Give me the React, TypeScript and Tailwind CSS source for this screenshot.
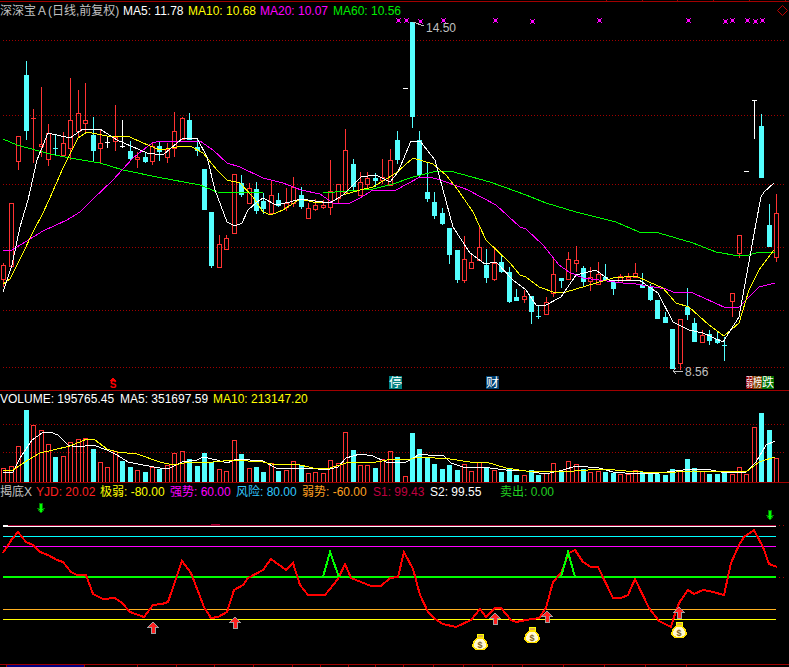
import React from 'react';

const RED = '#ff3232';
const CYAN = '#54ffff';
const GRID = '#a00000';

const xAt = (i: number) => Math.round(3.4 + 7.43 * i);

// kleur, high, top, bottom, low
const candles: [string, number, number, number, number][] = [
  ['r', 263, 265, 279, 287], ['r', 203, 203, 266, 266], ['r', 136, 136, 161, 170], ['c', 61, 75, 131, 140],
  ['r', 109, 118, 118, 163], ['r', 87, 144, 146, 157], ['r', 124, 133, 159, 166], ['c', 135, 148, 148, 155],
  ['r', 132, 143, 155, 155], ['r', 78, 120, 148, 160], ['r', 90, 113, 131, 138], ['r', 83, 120, 123, 132],
  ['c', 117, 135, 151, 162], ['r', 130, 143, 148, 163], ['w', 137, 142, 142, 148], ['r', 105, 137, 141, 151],
  ['w', 120, 146, 146, 148], ['c', 141, 151, 159, 161], ['r', 152, 157, 159, 168], ['c', 153, 157, 162, 163],
  ['r', 143, 146, 161, 165], ['c', 142, 146, 152, 161], ['r', 143, 149, 157, 163], ['r', 112, 131, 148, 157],
  ['r', 117, 118, 139, 139], ['c', 113, 120, 140, 140], ['c', 140, 147, 151, 156], ['c', 169, 169, 210, 210],
  ['c', 212, 212, 266, 268], ['r', 235, 244, 267, 267], ['r', 235, 238, 249, 250], ['r', 174, 174, 233, 233],
  ['c', 175, 183, 195, 197], ['r', 183, 188, 203, 203], ['c', 182, 189, 211, 214], ['c', 193, 201, 209, 214],
  ['r', 180, 195, 213, 213], ['c', 193, 200, 206, 207], ['r', 188, 203, 207, 211], ['r', 177, 187, 203, 207],
  ['c', 187, 195, 207, 209], ['r', 203, 208, 218, 218], ['r', 199, 205, 209, 211], ['r', 200, 205, 207, 209],
  ['r', 160, 191, 207, 215], ['r', 184, 184, 198, 203], ['r', 129, 150, 192, 192], ['c', 159, 164, 187, 192],
  ['r', 172, 182, 195, 195], ['r', 172, 178, 184, 188], ['c', 173, 178, 181, 187], ['r', 159, 177, 180, 184],
  ['r', 149, 160, 185, 185], ['c', 131, 140, 160, 164], ['w', 88, 88, 88, 88], ['c', 22, 22, 117, 128],
  ['c', 131, 140, 175, 177], ['c', 163, 192, 199, 202], ['c', 192, 202, 216, 219], ['c', 208, 213, 224, 225],
  ['c', 228, 228, 255, 264], ['c', 250, 250, 280, 283], ['r', 236, 259, 280, 283], ['r', 255, 262, 268, 268],
  ['r', 226, 247, 260, 260], ['c', 249, 265, 278, 283], ['r', 248, 263, 279, 281], ['c', 255, 262, 272, 273],
  ['c', 267, 272, 302, 303], ['c', 289, 297, 301, 301], ['r', 290, 296, 299, 303], ['c', 296, 296, 312, 324],
  ['c', 305, 316, 317, 319], ['r', 297, 302, 314, 315], ['r', 258, 274, 293, 297], ['c', 278, 278, 281, 288],
  ['r', 252, 259, 279, 279], ['r', 246, 260, 263, 272], ['c', 266, 268, 282, 286], ['r', 267, 277, 281, 291],
  ['r', 262, 274, 284, 284], ['c', 264, 277, 280, 280], ['c', 280, 282, 289, 295], ['r', 274, 276, 282, 282],
  ['r', 273, 277, 279, 280], ['r', 263, 273, 277, 277], ['c', 273, 285, 288, 288], ['c', 284, 286, 300, 301],
  ['c', 300, 300, 319, 319], ['c', 312, 317, 323, 323], ['c', 329, 329, 369, 369], ['r', 319, 319, 363, 370],
  ['c', 288, 307, 315, 320], ['c', 318, 323, 342, 342], ['r', 330, 335, 342, 342], ['c', 330, 334, 341, 345],
  ['c', 332, 339, 343, 344], ['c', 337, 345, 345, 361], ['r', 293, 293, 301, 317], ['r', 235, 235, 253, 258],
  ['w', 171, 171, 171, 171], ['w', 100, 100, 100, 139], ['c', 114, 126, 178, 178], ['c', 204, 225, 247, 247],
  ['r', 194, 213, 257, 262],
];

const volumes: [string, number][] = [
  ['r', 468], ['r', 466], ['r', 446], ['c', 410], ['r', 425], ['r', 430], ['r', 444], ['c', 457], ['r', 456], ['r', 442],
  ['r', 439], ['r', 438], ['c', 449], ['r', 462], ['r', 467], ['r', 451], ['c', 461], ['c', 467], ['r', 470], ['c', 472],
  ['r', 467], ['c', 469], ['r', 465], ['r', 453], ['r', 451], ['c', 459], ['c', 466], ['c', 453], ['c', 462], ['r', 469],
  ['r', 471], ['r', 440], ['c', 454], ['r', 468], ['c', 467], ['c', 472], ['r', 463], ['c', 471], ['r', 470], ['r', 461],
  ['c', 465], ['r', 473], ['r', 472], ['r', 473], ['r', 460], ['r', 463], ['r', 432], ['c', 450], ['r', 465], ['r', 465],
  ['c', 468], ['r', 459], ['r', 451], ['c', 457], ['r', 476], ['c', 433], ['c', 449], ['c', 457], ['c', 464], ['c', 469],
  ['c', 465], ['c', 470], ['r', 464], ['r', 471], ['r', 462], ['c', 468], ['r', 470], ['c', 472], ['c', 469], ['c', 475],
  ['r', 475], ['c', 470], ['c', 475], ['r', 473], ['r', 463], ['c', 472], ['r', 461], ['r', 464], ['c', 469], ['r', 472],
  ['r', 471], ['c', 472], ['c', 473], ['r', 474], ['r', 474], ['r', 470], ['c', 472], ['c', 472], ['c', 474], ['c', 475],
  ['c', 469], ['r', 470], ['c', 459], ['c', 468], ['r', 471], ['c', 474], ['c', 474], ['c', 472], ['r', 474], ['r', 467],
  ['r', 474], ['r', 427], ['c', 413], ['c', 430], ['r', 458],
];

const ma60 = '3,139 17,145 50,154 70,158 100,163 123,170 157,177 200,185 217,192 263,193 323,193 373,189 393,184 413,177 433,172 450,171 490,182 526,195 546,203 576,212 616,222 639,232 659,233 693,243 716,252 739,256 749,255 759,252 775,253';
const ma20 = '3,250 12,250 30,239 43,231 67,220 80,212 92,200 113,180 133,158 152,143 160,141 200,141 213,150 227,163 240,167 263,178 283,183 301,190 320,194 333,203 348,204 360,198 373,190 396,190 420,177 430,177 440,180 463,188 468,190 496,205 520,227 526,229 543,245 559,265 569,272 583,278 623,283 636,284 666,289 673,292 693,293 726,308 739,307 759,287 775,283';
const ma10 = '3,284 10,279 23,253 33,232 43,213 49,200 63,168 78,138 87,132 107,136 130,137 143,143 160,150 177,147 190,146 203,153 217,170 227,180 240,183 253,197 263,212 271,215 283,210 300,199 313,202 330,203 343,195 360,190 373,187 396,173 413,158 433,164 446,175 458,190 473,212 486,240 510,263 520,275 526,277 539,287 553,292 566,292 596,283 613,278 636,276 649,282 663,288 676,303 689,307 709,325 724,336 739,323 749,290 759,270 774,250';
const ma5 = '3,292 12,265 20,227 28,200 37,160 48,133 70,138 83,129 100,129 117,140 147,153 163,155 177,143 183,138 197,138 207,157 215,190 227,222 235,226 242,223 248,210 257,202 263,198 276,205 290,202 300,199 330,203 343,195 361,177 376,175 390,182 398,172 411,141 420,141 435,160 443,190 453,227 470,253 485,264 496,262 513,280 526,290 536,305 546,305 561,297 576,275 596,270 609,280 639,280 658,293 673,322 689,330 703,333 723,342 739,317 756,223 761,197 764,192 774,183';

const volMa5 = '3,472 13,472 20,458 32,440 42,433 50,432 58,435 68,445 77,447 93,445 107,450 117,455 128,462 143,465 160,468 170,468 182,462 197,460 203,457 217,460 227,463 237,459 263,461 276,468 293,468 310,468 326,470 338,467 346,458 360,454 373,456 386,462 406,462 420,454 436,456 443,455 451,463 463,467 490,468 506,470 526,471 546,474 563,470 576,466 599,468 613,472 636,474 659,473 683,470 706,469 726,473 746,472 756,462 766,445 775,441';
const volMa10 = '3,471 13,470 25,462 40,453 53,450 70,446 87,439 95,440 107,449 117,452 137,454 160,462 173,465 190,462 213,462 233,460 263,462 276,465 296,464 313,468 330,468 346,463 360,462 376,462 393,459 406,460 420,457 450,459 470,462 486,462 506,468 526,471 559,472 603,469 626,471 659,473 693,471 746,472 759,462 775,457';

const yjd = '3,553 12,539 18,532 26,542 33,545 40,552 48,555 57,560 63,562 71,572 77,575 86,575 93,594 103,599 115,598 122,603 130,612 144,617 153,605 162,604 168,602 182,561 191,573 204,607 211,618 218,617 227,612 234,590 243,585 248,578 263,570 271,559 286,570 293,563 300,585 308,595 325,595 338,579 345,564 351,578 371,586 381,586 390,578 398,577 404,552 413,569 420,595 428,612 435,619 443,624 456,627 471,620 480,609 486,617 495,608 501,608 511,620 516,622 526,620 539,618 546,608 553,582 561,573 569,553 575,550 583,562 591,567 598,567 613,598 621,598 628,595 635,579 649,608 659,621 671,627 674,617 679,603 688,590 694,594 703,590 709,591 724,595 731,563 739,545 744,537 754,530 763,547 769,564 777,567';

const crosses: [number, number][] = [[398, 20], [406, 20], [420, 21], [443, 20], [495, 20], [532, 21], [599, 20], [688, 20], [725, 21], [732, 20], [747, 20], [755, 21], [762, 20]];

const Dotted: React.FC<{ y: number; x2?: number }> = ({ y, x2 = 786 }) => (
  <line x1={3} x2={x2} y1={y + 0.5} y2={y + 0.5} stroke={GRID} strokeDasharray="1 2" />
);

const Candle: React.FC<{ i: number; d: [string, number, number, number, number] }> = ({ i, d }) => {
  const [k, high, top, bottom, low] = d;
  const x = xAt(i);
  const c = k === 'r' ? RED : k === 'c' ? CYAN : '#ffffff';
  return (
    <g>
      {high < top && <line x1={x + 0.5} x2={x + 0.5} y1={high} y2={top} stroke={c} />}
      {low > bottom && <line x1={x + 0.5} x2={x + 0.5} y1={bottom} y2={low} stroke={c} />}
      {bottom - top < 1
        ? <rect x={x - 2} y={top} width={5} height={1} fill={c} />
        : k === 'c'
          ? <rect x={x - 2} y={top} width={5} height={bottom - top} fill={c} />
          : <rect x={x - 1.5} y={top + 0.5} width={4} height={bottom - top} fill="none" stroke={c} />}
    </g>
  );
};

const Line: React.FC<{ pts: string; c: string; w?: number }> = ({ pts, c, w = 1 }) => (
  <polyline points={pts} fill="none" stroke={c} strokeWidth={w} />
);

const DownArrow: React.FC<{ x: number; y: number }> = ({ x, y }) => (
  <polygon transform={`translate(${x} ${y})`} points="-1.5,-5 1.5,-5 1.5,0 4,0 0,5 -4,0 -1.5,0" fill="#00ff00" stroke="#008000" />
);

const UpArrow: React.FC<{ x: number; y: number }> = ({ x, y }) => (
  <polygon transform={`translate(${x} ${y})`} points="0,-6 5,-1 2,-1 2,5 -2,5 -2,-1 -5,-1" fill="#ff2020" stroke="#a0a0a0" />
);

const MoneyBag: React.FC<{ x: number; y: number }> = ({ x, y }) => (
  <g transform={`translate(${x} ${y})`}>
    <rect x={-3} y={-8} width={6} height={3} fill="#e0b040" stroke="#ffff00" />
    <path d="M-2.5,-4 L2.5,-4 C5,-2 7,1 7,3.5 C7,6.5 4,7.5 0,7.5 C-4,7.5 -7,6.5 -7,3.5 C-7,1 -5,-2 -2.5,-4 Z" fill="#fff8d0" stroke="#ffe000" strokeWidth={1.5} />
    <text x={0} y={5.5} textAnchor="middle" fontSize={9} fontWeight={700} fill="#806020">$</text>
  </g>
);

// smalle vlaggen worden horizontaal samengedrukt
const Flag: React.FC<{ x: number; w: number; bg: string; t: string }> = ({ x, w, bg, t }) => (
  <g>
    <rect x={x} y={376} width={w} height={13} fill={bg} />
    <text transform={`translate(${x} 387) scale(${w / 12} 1)`} fontSize={12} fill="#ffffff">{t}</text>
  </g>
);

const App: React.FC = () => {
  return (
    <div className="w-[789px] h-[667px] bg-black overflow-hidden flex flex-col text-[12px] leading-none [font-family:'Liberation_Sans','Noto_Sans_CJK_SC',sans-serif]">
      {/* bovenrand */}
      <svg className="block shrink-0" width={789} height={2} shapeRendering="crispEdges">
        <rect x={0} y={1} width={789} height={1} fill={GRID} />
        {[606, 642, 677, 713, 749, 785].map(x => <rect key={x} x={x} y={0} width={1} height={1} fill={GRID} />)}
      </svg>

      <div className="h-[16px] pt-px shrink-0 flex items-center whitespace-nowrap">
        <span className="w-[123px] text-[#c0c0c0]">深深宝Ａ(日线,前复权)</span>
        <span className="w-[65px] text-white">MA5: 11.78</span>
        <span className="w-[72px] text-[#ffff00]">MA10: 10.68</span>
        <span className="w-[73px] text-[#ff00ff]">MA20: 10.07</span>
        <span className="text-[#00ee00]">MA60: 10.56</span>
        <svg className="ml-auto mr-px" width={11} height={11} viewBox="0 0 11 11">
          <polygon points="5.5,0.5 10.5,5.5 5.5,10.5 0.5,5.5" fill="none" stroke="#c00000" />
        </svg>
      </div>

      {/* koersgrafiek */}
      <svg className="block shrink-0" width={789} height={372} viewBox="0 18 789 372" shapeRendering="crispEdges">
        {[40, 115, 184, 247, 310, 367].map(y => <Dotted key={y} y={y} />)}
        {crosses.map(([x, y]) => (
          <g key={x} fill="#ff00ff">
            <rect x={x - 1} y={y - 1} width={3} height={3} />
            <rect x={x - 2} y={y - 2} width={1} height={1} />
            <rect x={x + 2} y={y - 2} width={1} height={1} />
            <rect x={x - 2} y={y + 2} width={1} height={1} />
            <rect x={x + 2} y={y + 2} width={1} height={1} />
          </g>
        ))}
        {candles.map((d, i) => <Candle key={i} i={i} d={d} />)}
        <Line pts={ma60} c="#00ff00" />
        <Line pts={ma20} c="#ff00ff" />
        <Line pts={ma10} c="#ffff00" />
        <Line pts={ma5} c="#ffffff" />

        <polyline points="413,22 424,26" stroke="#c0c0c0" fill="none" />
        <text x={426} y={32} fontSize={12} fill="#c0c0c0">14.50</text>
        <polyline points="673,371 683,371" stroke="#c0c0c0" fill="none" />
        <polyline points="676,368 673,371 676,374" stroke="#c0c0c0" fill="none" />
        <text x={685} y={376} fontSize={12} fill="#c0c0c0">8.56</text>

        <polygon points="113,377 116,381 110,381" fill="#ff0000" />
        <text x={113} y={388} textAnchor="middle" fontSize={10} fontWeight={700} fill="#ff0000">S</text>
        <Flag x={389} w={13} bg="#008080" t="停" />
        <Flag x={486} w={13} bg="#004070" t="财" />
        <Flag x={746} w={7} bg="#8b0000" t="弱" />
        <Flag x={753} w={9} bg="#804000" t="榜" />
        <Flag x={762} w={12} bg="#007000" t="跌" />
      </svg>

      {/* volume */}
      <div className="h-[15px] pt-[2px] shrink-0 flex items-center whitespace-nowrap border-t border-[#a00000]">
        <span className="w-[120px] text-white">VOLUME: 195765.45</span>
        <span className="w-[93px] text-white">MA5: 351697.59</span>
        <span className="text-[#ffff00]">MA10: 213147.20</span>
      </div>
      <svg className="block shrink-0" width={789} height={77} viewBox="0 405 789 77" shapeRendering="crispEdges">
        <Dotted y={424} />
        <Dotted y={452} />
        {volumes.map(([k, top], i) => k === 'c'
          ? <rect key={i} x={xAt(i) - 2} y={top} width={5} height={482 - top} fill={CYAN} />
          : <rect key={i} x={xAt(i) - 1.5} y={top + 0.5} width={4} height={482 - top} fill="none" stroke={RED} />)}
        <Line pts={volMa5} c="#ffffff" />
        <Line pts={volMa10} c="#ffff00" />
      </svg>

      {/* indicator */}
      <div className="h-[15px] pt-[3px] shrink-0 flex items-center whitespace-nowrap border-t border-[#a00000]">
        <span className="w-[36px] text-[#c0c0c0]">揭底X</span>
        <span className="w-[64px] text-[#ff2020]">YJD: 20.02</span>
        <span className="w-[70px] text-[#ffff00]">极弱: -80.00</span>
        <span className="w-[66px] text-[#ff00ff]">强势: 60.00</span>
        <span className="w-[66px] text-[#30c8ff]">风险: 80.00</span>
        <span className="w-[71px] text-[#ffa020]">弱势: -60.00</span>
        <span className="w-[57px] text-[#c00040]">S1: 99.43</span>
        <span className="w-[70px] text-white">S2: 99.55</span>
        <span className="text-[#20d020]">卖出: 0.00</span>
      </div>
      <svg className="block shrink-0" width={789} height={170} viewBox="0 497 789 170" shapeRendering="crispEdges">
        <line x1={8} x2={776} y1={525.5} y2={525.5} stroke="#a00030" />
        <rect x={211} y={524} width={9} height={1} fill="#a00030" />
        <rect x={3} y={525} width={5} height={1} fill="#ffffff" />
        <line x1={3} x2={776} y1={526.5} y2={526.5} stroke="#ffffff" />
        <line x1={3} x2={776} y1={536.5} y2={536.5} stroke="#00ffff" />
        <line x1={3} x2={776} y1={546.5} y2={546.5} stroke="#ff00ff" />
        <rect x={3} y={576} width={773} height={2} fill="#00ff00" />
        <line x1={3} x2={776} y1={609.5} y2={609.5} stroke="#ffb020" />
        <line x1={3} x2={776} y1={619.5} y2={619.5} stroke="#ffff00" />
        <line x1={779} x2={786} y1={525.5} y2={525.5} stroke={GRID} strokeDasharray="1 3" />
        <line x1={779} x2={786} y1={577.5} y2={577.5} stroke={GRID} strokeDasharray="1 3" />

        <Line pts={yjd} c="#ff0000" w={2} />
        <Line pts="323,577 330,552 339,577" c="#00ff00" w={2} />
        <Line pts="561,577 568,552 575,577" c="#00ff00" w={2} />

        <DownArrow x={41} y={508} />
        <DownArrow x={770} y={515} />
        <UpArrow x={153} y={628} />
        <UpArrow x={235} y={623} />
        <UpArrow x={495} y={619} />
        <UpArrow x={547} y={617} />
        <UpArrow x={679} y={613} />
        <MoneyBag x={480} y={642} />
        <MoneyBag x={532} y={635} />
        <MoneyBag x={679} y={630} />

        <rect x={0} y={664} width={789} height={1} fill={GRID} />
        <rect x={7} y={665} width={77} height={2} fill="#000080" />
        {[6, 84, 137, 176, 214, 253, 292, 320, 348, 375, 403, 433, 463, 492, 522, 563, 604, 645, 686].map(x => (
          <rect key={x} x={x} y={665} width={1} height={2} fill={GRID} />
        ))}
      </svg>
    </div>
  );
};

export default App;
